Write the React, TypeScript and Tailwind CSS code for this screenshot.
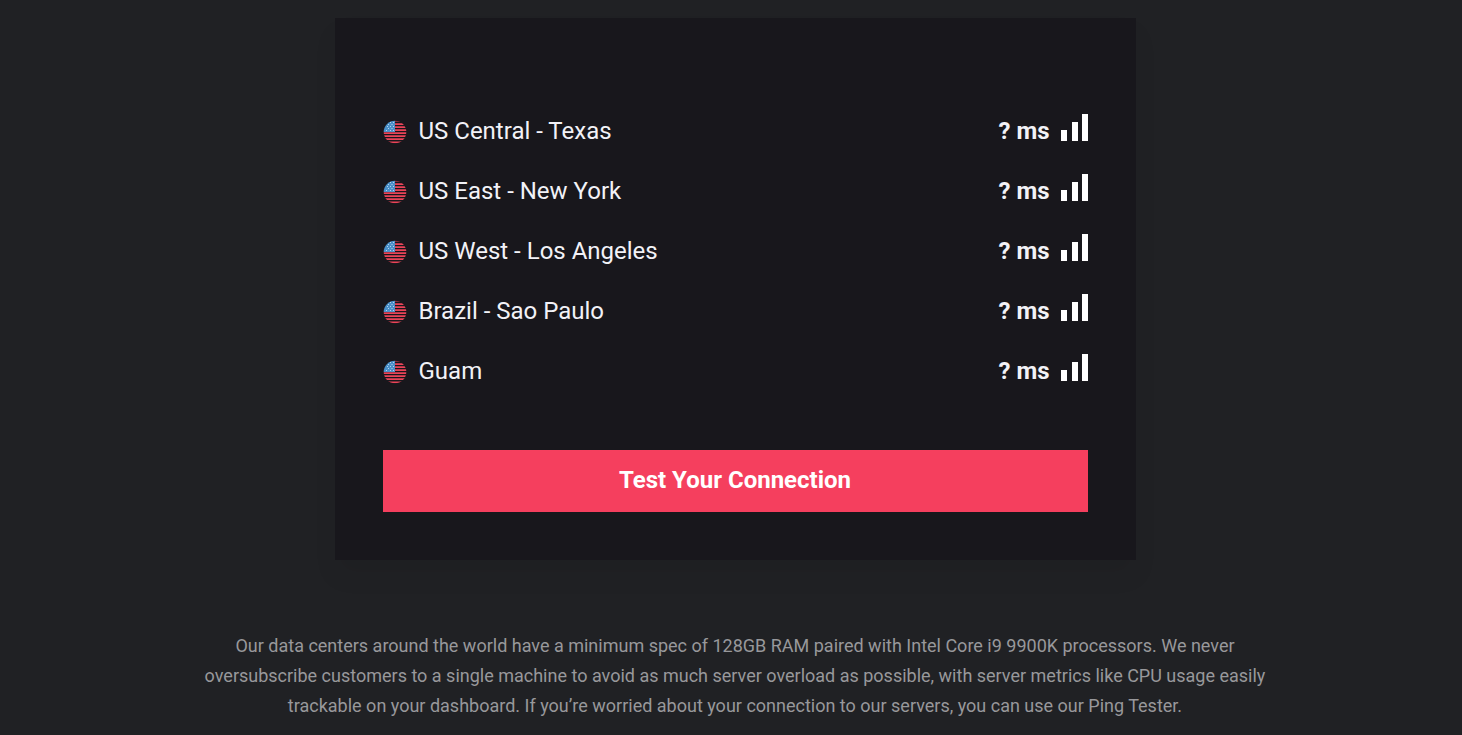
import React from "react";

const LOCATIONS = [
  "US Central - Texas",
  "US East - New York",
  "US West - Los Angeles",
  "Brazil - Sao Paulo",
  "Guam",
];

function FlagIcon() {
  return (
    <svg viewBox="0 0 24 24" className="mt-0.5 size-6 shrink-0" aria-hidden="true">
      <clipPath id="flag-disc">
        <circle cx="12" cy="12" r="11.3" />
      </clipPath>
      <g clipPath="url(#flag-disc)">
        <path
          fill="#ea4458"
          d="M12 .4h12v1.200H12zM12 3.300h12v1.600H12zM12 6.300h12v1.600H12zM12 9.300h12v1.600H12zM0 12.200h24v1.700H0zM0 15.200h24v1.700H0zM0 18.300h24v1.700H0zM0 21.400h24v1.800H0z"
        />
        <path d="M0 0h12v12H0Z" fill="#4a90c8" />
        <g fill="#d4e9f8">
          <circle cx="10.5" cy="2.500" r=".5" />
          <circle cx="7.5" cy="2.500" r=".5" />
          <circle cx="9" cy="4.500" r=".5" />
          <circle cx="5.500" cy="4.500" r=".5" />
          <circle cx="10.5" cy="6.500" r=".5" />
          <circle cx="7.5" cy="6.500" r=".5" />
          <circle cx="4.500" cy="6.500" r=".5" />
          <circle cx="9" cy="8.500" r=".5" />
          <circle cx="5.500" cy="8.500" r=".5" />
          <circle cx="10.5" cy="10.500" r=".5" />
          <circle cx="7.5" cy="10.500" r=".5" />
          <circle cx="3.500" cy="10.500" r=".5" />
        </g>
      </g>
    </svg>
  );
}

function SignalIcon() {
  return (
    <svg viewBox="0 0 28 28" className="mb-2 size-7" fill="#fff" aria-hidden="true">
      <path d="M1 17h6v11H1zM12 9h6v19h-6zM22 1h6v27h-6z" />
    </svg>
  );
}

export default function App() {
  return (
    <main className="min-h-screen bg-[#202124] pt-[18px] pr-4 pl-6 font-['Roboto',sans-serif] text-[#f2f2f7]">
      <section className="mx-auto max-w-[801px] bg-[#18171c] px-12 pt-[83px] pb-12 shadow-[0_16px_24px_rgba(0,0,0,0.05)]">
        <ul>
          {LOCATIONS.map((name) => (
            <li key={name} className="flex h-15 items-center justify-between">
              <span className="flex items-center gap-3 text-2xl">
                <FlagIcon />
                {name}
              </span>
              <span className="flex items-center gap-2.5 text-2xl font-bold">
                ? ms
                <SignalIcon />
              </span>
            </li>
          ))}
        </ul>
        <button type="button" className="mt-[49px] h-[62px] w-full bg-[#f53f5e] pb-0.5 text-2xl font-bold text-white">
          Test Your Connection
        </button>
      </section>
      <p className="mx-auto mt-[71px] max-w-[1110px] text-center text-lg leading-[30px] text-[#98989b]">
        Our data centers around the world have a minimum spec of 128GB RAM paired with Intel Core i9 9900K processors. We never oversubscribe customers to a single machine to avoid as much server overload as possible, with server metrics like CPU usage easily trackable on your dashboard. If you’re worried about your connection to our servers, you can use our Ping Tester.
      </p>
    </main>
  );
}
